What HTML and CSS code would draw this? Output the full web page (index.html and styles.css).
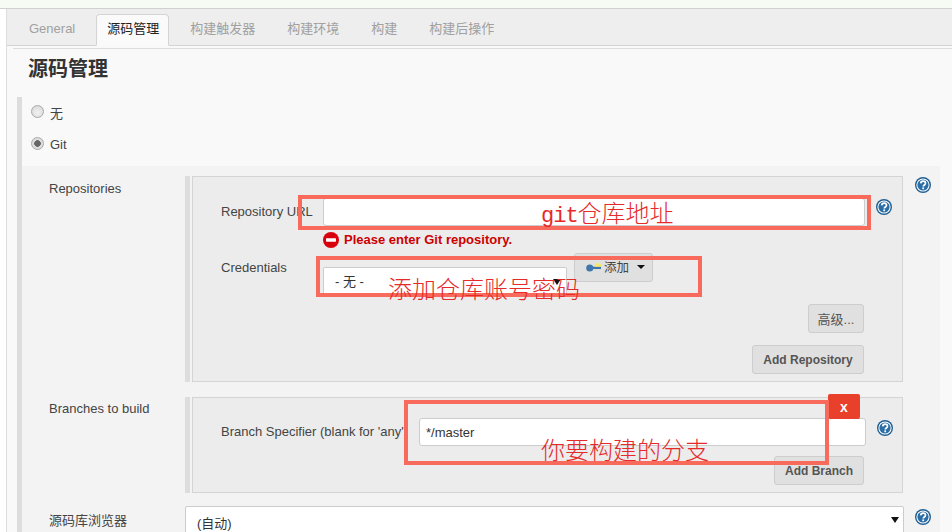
FILE: index.html
```html
<!DOCTYPE html>
<html lang="zh">
<head>
<meta charset="utf-8">
<title>源码管理</title>
<link rel="stylesheet" href="styles.css">
</head>
<body>
<svg class="defs" width="0" height="0" aria-hidden="true">
  <symbol id="help" viewBox="0 0 16 16">
    <circle cx="8" cy="8" r="8" fill="#1f5f93"/>
    <circle cx="8" cy="8" r="6.6" fill="#fff"/>
    <circle cx="8" cy="8" r="5.6" fill="#2b6ea6"/>
    <path d="M5.7 6.4c.1-1.5 1.1-2.3 2.4-2.3 1.4 0 2.4.9 2.4 2.1 0 1.8-2.2 1.8-2.2 3.4" fill="none" stroke="#fff" stroke-width="1.7"/>
    <rect x="7.3" y="10.4" width="1.8" height="1.8" fill="#fff"/>
  </symbol>
</svg>
<div class="topstrip"></div>
<div class="shell">
  <div class="gutter"></div>
  <main class="panel">
    <nav class="tabs">
      <span class="tab first">General</span>
      <span class="tab active">源码管理</span>
      <span class="tab">构建触发器</span>
      <span class="tab">构建环境</span>
      <span class="tab">构建</span>
      <span class="tab">构建后操作</span>
    </nav>
    <section class="section">
      <h2 class="title">源码管理</h2>
      <div class="scm">
        <label class="radio-row"><input class="radio" type="radio" name="scm"><span>无</span></label>
        <label class="radio-row git-radio"><input class="radio" type="radio" name="scm" checked><span>Git</span></label>
        <div class="git-form">
          <div class="row repos-row">
            <div class="row-label">Repositories</div>
            <div class="bar">
              <div class="box repo-box">
                <div class="field">
                  <span class="field-label url-label">Repository URL</span>
                  <input class="text-input" type="text">
                  <svg class="help inner-help"><use href="#help"/></svg>
                </div>
                <div class="error">
                  <svg class="error-icon" viewBox="0 0 16 16"><circle cx="8" cy="8" r="8" fill="#d8000c"/><rect x="3" y="6.3" width="10" height="3.4" rx=".6" fill="#fff"/></svg>
                  <span>Please enter Git repository.</span>
                </div>
                <div class="field cred-field">
                  <span class="field-label url-label">Credentials</span>
                  <span class="select-wrap cred-select"><select class="select"><option>- 无 -</option></select></span>
                  <button class="btn add-btn" type="button">
                    <svg class="key" viewBox="0 0 16 10"><circle cx="4" cy="6" r="3.8" fill="#3f77ad"/><rect x="6" y="4.6" width="10" height="2.6" fill="#3f77ad"/><path d="M9 4.6c0-2.4 2-4 3.8-4 1.5 0 2.7.8 3.2 1.6v2.4z" fill="#f2e66b"/></svg>
                    <span>添加</span>
                    <i class="caret"></i>
                  </button>
                </div>
                <div class="actions adv"><button class="btn plain" type="button">高级...</button></div>
                <div class="actions add-repo"><button class="btn" type="button">Add Repository</button></div>
              </div>
            </div>
            <svg class="help"><use href="#help"/></svg>
          </div>
          <div class="row branch-row">
            <div class="row-label">Branches to build</div>
            <div class="bar">
              <div class="box branch-box">
                <button class="close" type="button">x</button>
                <div class="field">
                  <span class="field-label branch-label">Branch Specifier (blank for 'any')</span>
                  <input class="text-input" type="text" value="*/master">
                  <svg class="help inner-help"><use href="#help"/></svg>
                </div>
                <div class="actions add-branch"><button class="btn" type="button">Add Branch</button></div>
              </div>
            </div>
            <span class="help-spacer"></span>
          </div>
          <div class="row browser-row">
            <div class="row-label">源码库浏览器</div>
            <span class="select-wrap browser-select"><select class="select"><option>(自动)</option></select></span>
            <svg class="help"><use href="#help"/></svg>
          </div>
        </div>
      </div>
    </section>
  </main>
</div>
<div class="mark mark-url"><span class="mark-text"><span class="latin">git</span>仓库地址</span></div>
<div class="mark mark-cred"><span class="mark-text">添加仓库账号密码</span></div>
<div class="mark mark-branch"><span class="mark-text">你要构建的分支</span></div>
</body>
</html>
```
FILE: styles.css
```css
* { box-sizing: border-box; }
html, body { margin: 0; height: 532px; overflow: hidden; }
body {
  position: relative;
  font-family: "Liberation Sans", "Noto Sans CJK SC", sans-serif;
  font-size: 13px;
  color: #333;
  background: #fff;
}
.defs { position: absolute; }
.topstrip { height: 9px; background: #f6fbf3; border-bottom: 1px solid #d0d0d0; }
.shell { display: flex; height: 523px; }
.gutter { width: 7px; flex: none; background: #fff; border-right: 1px solid #ddd; }
.panel { flex: 1; min-width: 0; background: #f9f9f9; }

.tabs {
  display: flex;
  align-items: flex-end;
  gap: 10px;
  height: 37px;
  padding-left: 11px;
  background: #eee;
  border-bottom: 1px solid #d4d4d4;
}
.tab {
  height: 32px;
  padding: 0 10px;
  margin-bottom: -1px;
  font-size: 13px;
  line-height: 28px;
  color: #a0a0a0;
  border: 1px solid transparent;
}
.tab.first { margin-right: 0; }
.tab.active {
  padding-right: 9px;
  margin-right: 0;
  color: #222;
  background: #fafafa;
  border-color: #d4d4d4;
  border-bottom-color: #fafafa;
  border-radius: 4px 4px 0 0;
}

.section { margin: 2px 0 0 6px; border-top: 1px solid #ddd; }
.title {
  margin: 0;
  height: 48px;
  padding: 8px 0 0 15px;
  font-size: 20px;
  line-height: 24px;
  font-weight: 700;
  color: #333;
}
.scm {
  margin-left: 4px;
  margin-right: 12px;
  border-left: 5px solid #ddd;
  padding-top: 7px;
  height: 440px;
}
.radio-row {
  display: flex;
  align-items: center;
  gap: 6px;
  height: 17px;
  margin-left: 9px;
  color: #444;
  font-size: 13px;
}
.git-radio { margin-top: 15px; }
.radio {
  appearance: none;
  width: 13px;
  height: 13px;
  margin: 0 0 2px;
  border: 1px solid #a8a8a8;
  border-radius: 50%;
  background: radial-gradient(circle at 50% 60%, #f2f2f2, #d4d4d4);
}
.radio:checked { background: radial-gradient(circle, #666 0 3px, #ddd 3.6px); }

.git-form { margin-top: 13px; padding-top: 10px; background: #f3f3f3; height: 380px; }
.row { display: flex; }
.row-label { width: 163px; flex: none; padding: 5px 0 0 27px; line-height: 15px; color: #444; }
.bar { width: 718px; flex: none; border-left: 5px solid #ddd; padding-left: 2px; }
.box {
  position: relative;
  background: #ececec;
  border: 1px solid #d4d4d4;
}
.help { display: block; width: 16px; height: 16px; margin: 0 0 0 12px; flex: none; }
.repos-row > .help { margin-top: 1px; }
.help-spacer { width: 28px; }
.repo-box { height: 206px; padding: 21px 38px 0 28px; }
.branch-box { height: 96px; padding: 20px 38px 0 28px; }
.field { display: flex; align-items: flex-start; }
.field-label { flex: none; line-height: 28px; color: #444; white-space: nowrap; }
.url-label { width: 102px; }
.branch-label { width: 198px; }
.text-input {
  flex: none;
  height: 28px;
  padding: 0 6px;
  border: 1px solid #ccc;
  border-radius: 3px;
  background: #fff;
  font: inherit;
  color: #333;
  outline: none;
}
.repo-box .text-input { width: 542px; }
.branch-box .text-input { width: 447px; }
.inner-help { margin: 1px 0 0 11px; }
.branch-box .inner-help { margin-top: 2px; }
.error {
  display: flex;
  align-items: center;
  gap: 5px;
  height: 18px;
  margin: 4px 0 0 102px;
  font-weight: 700;
  color: #cc0000;
  white-space: nowrap;
}
.error-icon { width: 16px; height: 16px; flex: none; margin-top: 2px; }
.cred-field { margin-top: 5px; height: 51px; }
.cred-field .field-label { padding-top: 1px; }
.select-wrap { position: relative; display: block; flex: none; }
.select-wrap::after {
  content: "";
  position: absolute;
  top: 12px;
  right: 6px;
  border: 4px solid transparent;
  border-top: 6px solid #111;
  border-bottom: 0;
}
.select {
  display: block;
  width: 100%;
  height: 29px;
  appearance: none;
  border: 1px solid #ccc;
  border-radius: 2px;
  background: #fff;
  font: inherit;
  color: #333;
  outline: none;
}
.cred-select { width: 244px; margin-top: 14px; }
.cred-select .select { padding-left: 11px; }
.browser-select { width: 719px; }
.browser-select::after { top: 11px; right: 5px; }
.browser-select .select { height: 34px; padding: 1px 0 0 11px; }
.branch-row .row-label { padding-top: 4px; }
.browser-row .row-label { padding-top: 7px; }
.browser-row { margin-top: 13px; }
.branch-row { margin-top: 15px; }
.browser-row .help { margin: 3px 0 0 11px; }
.btn {
  height: 29px;
  padding: 0;
  border: 1px solid #cdcdcd;
  border-radius: 3px;
  background: #e0e0e0;
  font-family: inherit;
  font-size: 12px;
  font-weight: 700;
  color: #555;
  white-space: nowrap;
  width: 112px;
}
.plain { font-weight: 400; font-size: 13px; width: 56px; }
.add-branch .btn { width: 90px; }
.add-btn {
  display: flex;
  align-items: center;
  width: 79px;
  margin-left: 7px;
  padding: 0 0 2px 11px;
  font-weight: 400;
  font-size: 12.5px;
  color: #444;
}
.key { width: 15px; height: 10px; margin-right: 3px; }
.caret {
  margin-left: 8px;
  border: 4px solid transparent;
  border-top: 4px solid #111;
  border-bottom: 0;
}
.actions { display: flex; justify-content: flex-end; }
.add-repo { margin-top: 12px; }
.add-branch { margin-top: 10px; }
.close {
  position: absolute;
  top: -4px;
  right: 42px;
  width: 32px;
  height: 25px;
  border: 0;
  border-radius: 2px;
  background: #e8402a;
  font-family: inherit;
  font-size: 14px;
  line-height: 22px;
  font-weight: 700;
  color: #fff;
}

.mark { position: absolute; border: 4px solid #f76a5c; }
.mark-url { left: 298px; top: 195px; width: 573px; height: 35px; }
.mark-cred { left: 316px; top: 256px; width: 386px; height: 41px; }
.mark-branch { left: 404px; top: 400px; width: 425px; height: 65px; }
.mark-text {
  position: absolute;
  font-family: "Noto Sans CJK SC", sans-serif;
  font-size: 24px;
  line-height: 28px;
  font-weight: 300;
  color: #e62a2a;
  white-space: nowrap;
}
.latin { font-family: "Liberation Mono", monospace; font-size: 22px; font-weight: 400; letter-spacing: -1px; }
.mark-url .mark-text { left: 239px; top: -1px; }
.mark-cred .mark-text { left: 68px; top: 14px; }
.mark-branch .mark-text { left: 133px; top: 31px; }
```
